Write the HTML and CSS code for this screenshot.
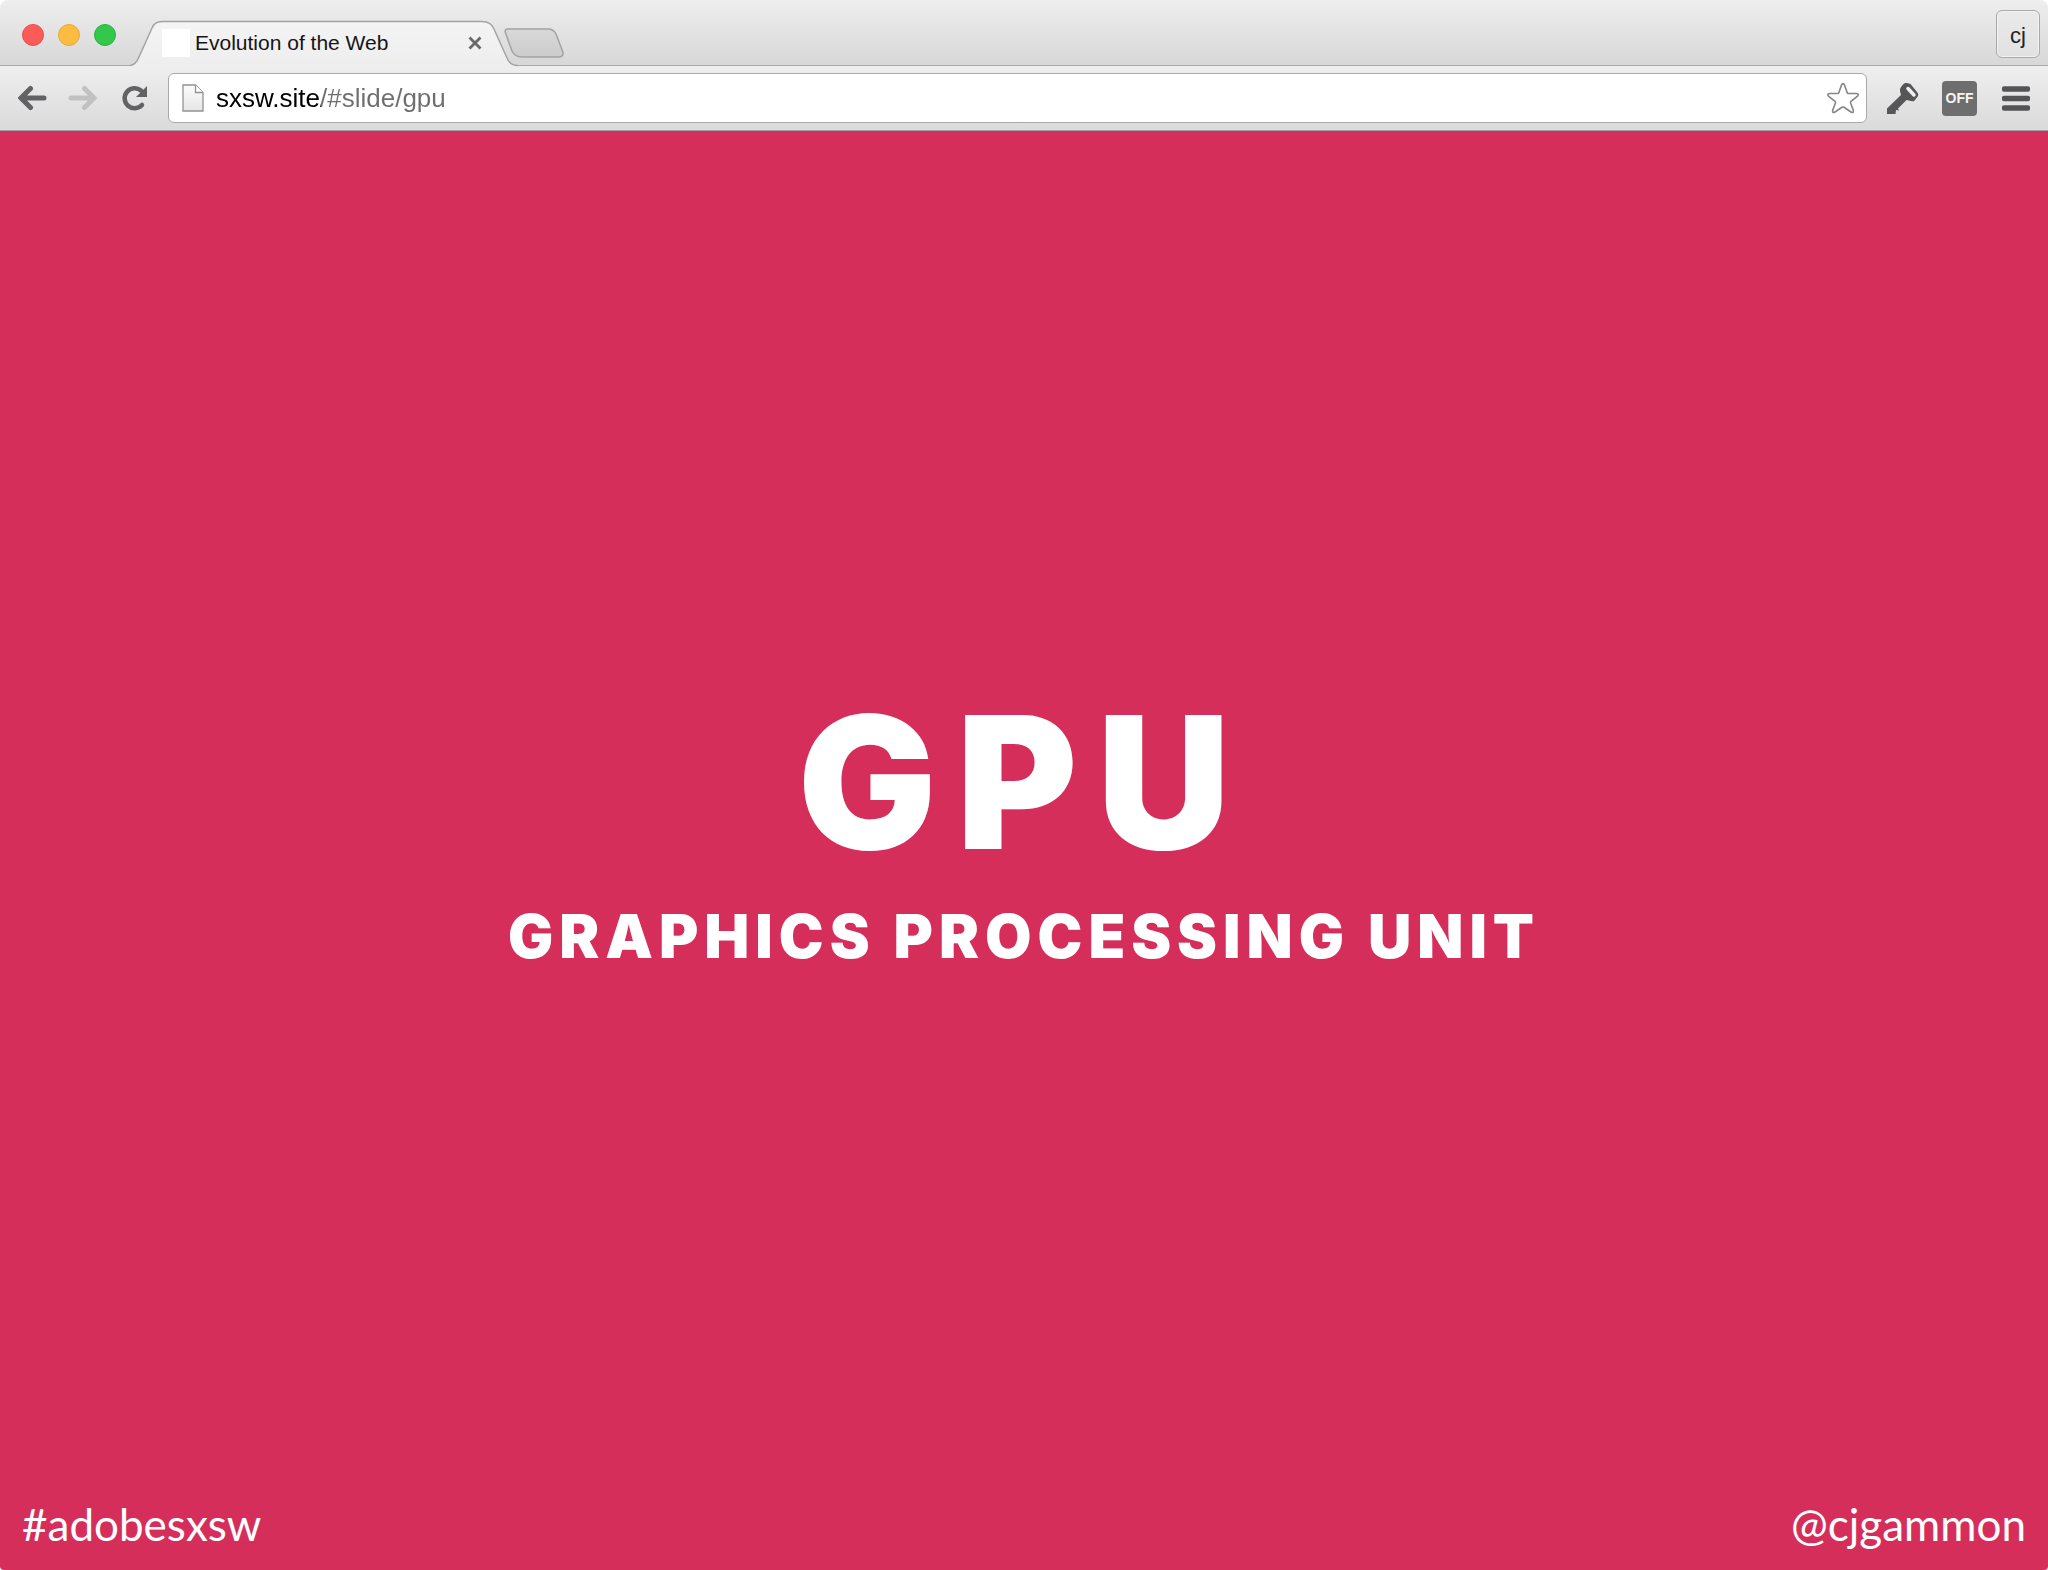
FILE: index.html
```html
<!DOCTYPE html>
<html lang="en">
<head>
<meta charset="utf-8">
<title>Evolution of the Web</title>
<link rel="stylesheet" href="styles.css">
</head>
<body>
<div class="window">
  <header class="chrome">
    <div class="tabstrip">
      <div class="lights">
        <button class="light light-close" aria-label="Close window"></button>
        <button class="light light-minimize" aria-label="Minimize window"></button>
        <button class="light light-zoom" aria-label="Zoom window"></button>
      </div>
      <div class="tab">
        <svg class="tab-shape" viewBox="0 0 388 47" aria-hidden="true">
          <defs><linearGradient id="tabfill" x1="0" y1="0" x2="0" y2="1"><stop offset="0" stop-color="#f4f4f4"/><stop offset="1" stop-color="#efeeef"/></linearGradient></defs>
          <path d="M0 45.500C5 45 7 42 9 37L22 8C24 3 27 1.500 32 1.500H352C359 1.500 362 4 364 9L377 38C379 43 382 45.500 388 45.500V47H0Z" fill="url(#tabfill)"/>
          <path d="M0 45.500C5 45 7 42 9 37L22 8C24 3 27 1.500 32 1.500H352C359 1.500 362 4 364 9L377 38C379 43 382 45.500 388 45.500" fill="none" stroke="#a5a4a5" stroke-width="1.500"/>
        </svg>
        <span class="favicon"></span>
        <span class="tab-title">Evolution of the Web</span>
        <button class="tab-close" aria-label="Close tab"><svg width="14" height="14" viewBox="0 0 14 14"><path d="M1.500 1.500L12.500 12.500M12.500 1.500L1.500 12.500" stroke="#696969" stroke-width="2.800"/></svg></button>
      </div>
      <button class="new-tab" aria-label="New tab"><svg width="60" height="30" viewBox="0 0 60 30"><defs><linearGradient id="newfill" x1="0" y1="0" x2="0" y2="1"><stop offset="0" stop-color="#dad9da"/><stop offset="1" stop-color="#cdcccd"/></linearGradient></defs><path d="M4 1H44C48 1 50 2 52 6L58.500 23C60 27 58 29 55 29H18C13 29 10 27 8 23L1.500 5C.5 2.500 1.500 1 4 1Z" fill="url(#newfill)" stroke="#a3a2a3" stroke-width="1.500"/></svg></button>
      <button class="profile">cj</button>
    </div>
    <div class="toolbar">
      <button class="tool tool-back" aria-label="Back"><svg width="30" height="26" viewBox="0 0 30 26"><path d="M26 13H5M12.500 3.500L3 13L12.500 22.500" fill="none" stroke="#626163" stroke-width="5" stroke-linecap="round" stroke-linejoin="miter"/></svg></button>
      <button class="tool tool-forward" aria-label="Forward"><svg width="30" height="26" viewBox="0 0 30 26"><path d="M3 13H24M16.500 3.500L26 13L16.500 22.500" fill="none" stroke="#c2c1c2" stroke-width="5" stroke-linecap="round"/></svg></button>
      <button class="tool tool-reload" aria-label="Reload"><svg width="26" height="26" viewBox="0 0 26 26"><path d="M19 5.500A10 10 0 1 0 20 20" fill="none" stroke="#626163" stroke-width="4.500" stroke-linecap="round"/><path d="M25 1V12H14L18 8Z" fill="#626163"/></svg></button>
      <form class="omnibox">
        <svg width="22" height="28" viewBox="0 0 22 28" aria-hidden="true"><defs><linearGradient id="page" x1="0" y1="0" x2="0" y2="1"><stop offset="0" stop-color="#fcfcfc"/><stop offset="1" stop-color="#e6e6e6"/></linearGradient></defs><path d="M1 1H13.500L21 8.500V27H1Z" fill="url(#page)" stroke="#939393" stroke-width="1.300"/><path d="M13.500 1V8.500H21" fill="#fff" stroke="#939393" stroke-width="1.300"/></svg>
        <input class="address" type="text" value="sxsw.site/#slide/gpu" aria-label="Address">
        <button class="tool" type="button" aria-label="Bookmark this page"><svg width="34" height="32" viewBox="0 0 34 32"><path d="M15.500 3Q17 .2 18.500 3L21.200 10.700Q21.500 11.500 22.500 11.500H30.500Q33.600 12 31.200 14.500L25 19.400Q24.300 20 24.600 20.900L27.300 28.300Q27.900 31.500 25 30L18 25.300Q17 24.700 16 25.300L9 30Q6.100 31.500 6.700 28.300L9.400 20.900Q9.700 20 9 19.400L2.800 14.500Q.4 12 3.500 11.500H11.500Q12.500 11.500 12.800 10.700Z" fill="#fff" stroke="#858585" stroke-width="1.600"/></svg></button>
      </form>
      <button class="tool tool-key" aria-label="Passwords"><svg width="32" height="32" viewBox="0 0 32 32"><path d="M16.500 2Q18 .5 20 1L23.500 2L30 10Q32 12 31 14L28 18Q27 20 24 19L19.500 18L11 26.500L12 28.500L9 28L8.500 32H0V26.500L14 13L13 9Q12.500 7 14 5Z" fill="#565557"/><path d="M21 6.500L27 13" stroke="#f1eff1" stroke-width="3.500" stroke-linecap="round"/></svg></button>
      <button class="extension">OFF</button>
      <button class="tool tool-menu" aria-label="Menu"><svg width="28" height="25" viewBox="0 0 28 25"><path d="M2.500 3H25.500M2.500 12.500H25.500M2.500 22H25.500" stroke="#545355" stroke-width="5.500" stroke-linecap="round"/></svg></button>
    </div>
  </header>
  <main class="slide">
    <div class="headline">
      <h1 class="title">GPU</h1>
      <h2 class="subtitle">GRAPHICS PROCESSING UNIT</h2>
    </div>
    <footer class="credits"><span>#adobesxsw</span><span>@cjgammon</span></footer>
  </main>
</div>
</body>
</html>
```
FILE: styles.css
```css
* { box-sizing: border-box; }
body { margin: 0; background: #fff; font-family: "Liberation Sans", Arial, sans-serif; }
button { padding: 0; border: 0; background: none; font: inherit; color: inherit; }
svg { display: block; flex: none; }

.window { display: flex; flex-direction: column; min-height: 100vh; border-radius: 8px 8px 4px 4px; overflow: hidden; }

.tabstrip {
  display: flex; align-items: flex-end; height: 66px; padding: 0 8px 0 22px;
  background: linear-gradient(#eeeeee, #d8d7d8);
  box-shadow: inset 0 -1px #aaa9aa;
}
.lights { display: flex; gap: 14px; padding-bottom: 20px; margin-right: 14px; }
.light { width: 22px; height: 22px; border-radius: 50%; }
.light-close { background: #fc5b57; border: 1px solid #e94c48; }
.light-minimize { background: #fdbc40; border: 1px solid #e5a936; }
.light-zoom { background: #34c84a; border: 1px solid #27b13c; }

.tab { position: relative; display: flex; align-items: center; width: 388px; height: 46px; padding: 0 36px 0 32px; }
.tab-shape { position: absolute; left: 0; top: 0; width: 388px; height: 47px; }
.favicon { position: relative; width: 28px; height: 28px; background: #fff; }
.tab-title { position: relative; flex: 1; margin-left: 5px; font-size: 21px; line-height: 28px; color: #151515; }
.tab-close { position: relative; }
.new-tab { margin: 0 0 8px -14px; }
.profile {
  width: 44px; height: 48px; margin: 0 0 8px auto; padding-top: 4px; border: 1px solid #aaa9aa; border-radius: 6px;
  background: linear-gradient(#ebeaeb, #e2e1e2); box-shadow: inset 0 0 0 1px #f4f3f4;
  font-size: 22px; color: #222;
}

.toolbar {
  display: flex; align-items: center; height: 65px; padding: 0 18px;
  background: linear-gradient(#f0eff0, #dbdadb); border-bottom: 1px solid #a19fa1;
}
.tool-forward { margin-left: 20px; }
.tool-reload { margin-left: 24px; }
.omnibox {
  display: flex; flex: 1; align-items: center; height: 50px; margin: 0 20px; padding: 0 6px 0 13px;
  border: 1px solid #aaa9aa; border-radius: 6px; background: #fff;
}
.address {
  flex: 1; min-width: 0; height: 36px; margin-left: 12px; padding: 0; border: 0; outline: 0;
  font: 26px/36px "Liberation Sans", Arial, sans-serif; color: transparent;
  background: linear-gradient(90deg, #000 105px, #6e6e6e 105px); -webkit-background-clip: text; background-clip: text;
}
.extension { width: 35px; height: 35px; margin: 0 25px 0 23px; border-radius: 4px; background: #6f6e6f; color: #f4f4f4; font-size: 14px; font-weight: 700; }

.slide { display: flex; flex: 1; flex-direction: column; background: #d62e5a; color: #fff; }
.headline { display: flex; flex: 1; flex-direction: column; align-items: center; justify-content: center; padding-top: 16px; }
.title, .subtitle { margin: 0; font-family: Inter, Lato, sans-serif; font-weight: 900; text-align: center; }
.title { font-size: 184px; line-height: 224px; letter-spacing: 20px; }
.subtitle { font-size: 60px; line-height: 84px; letter-spacing: 6px; }
.credits { display: flex; justify-content: space-between; padding: 0 22px 22px; font: 44px/48px Lato, sans-serif; }
```
